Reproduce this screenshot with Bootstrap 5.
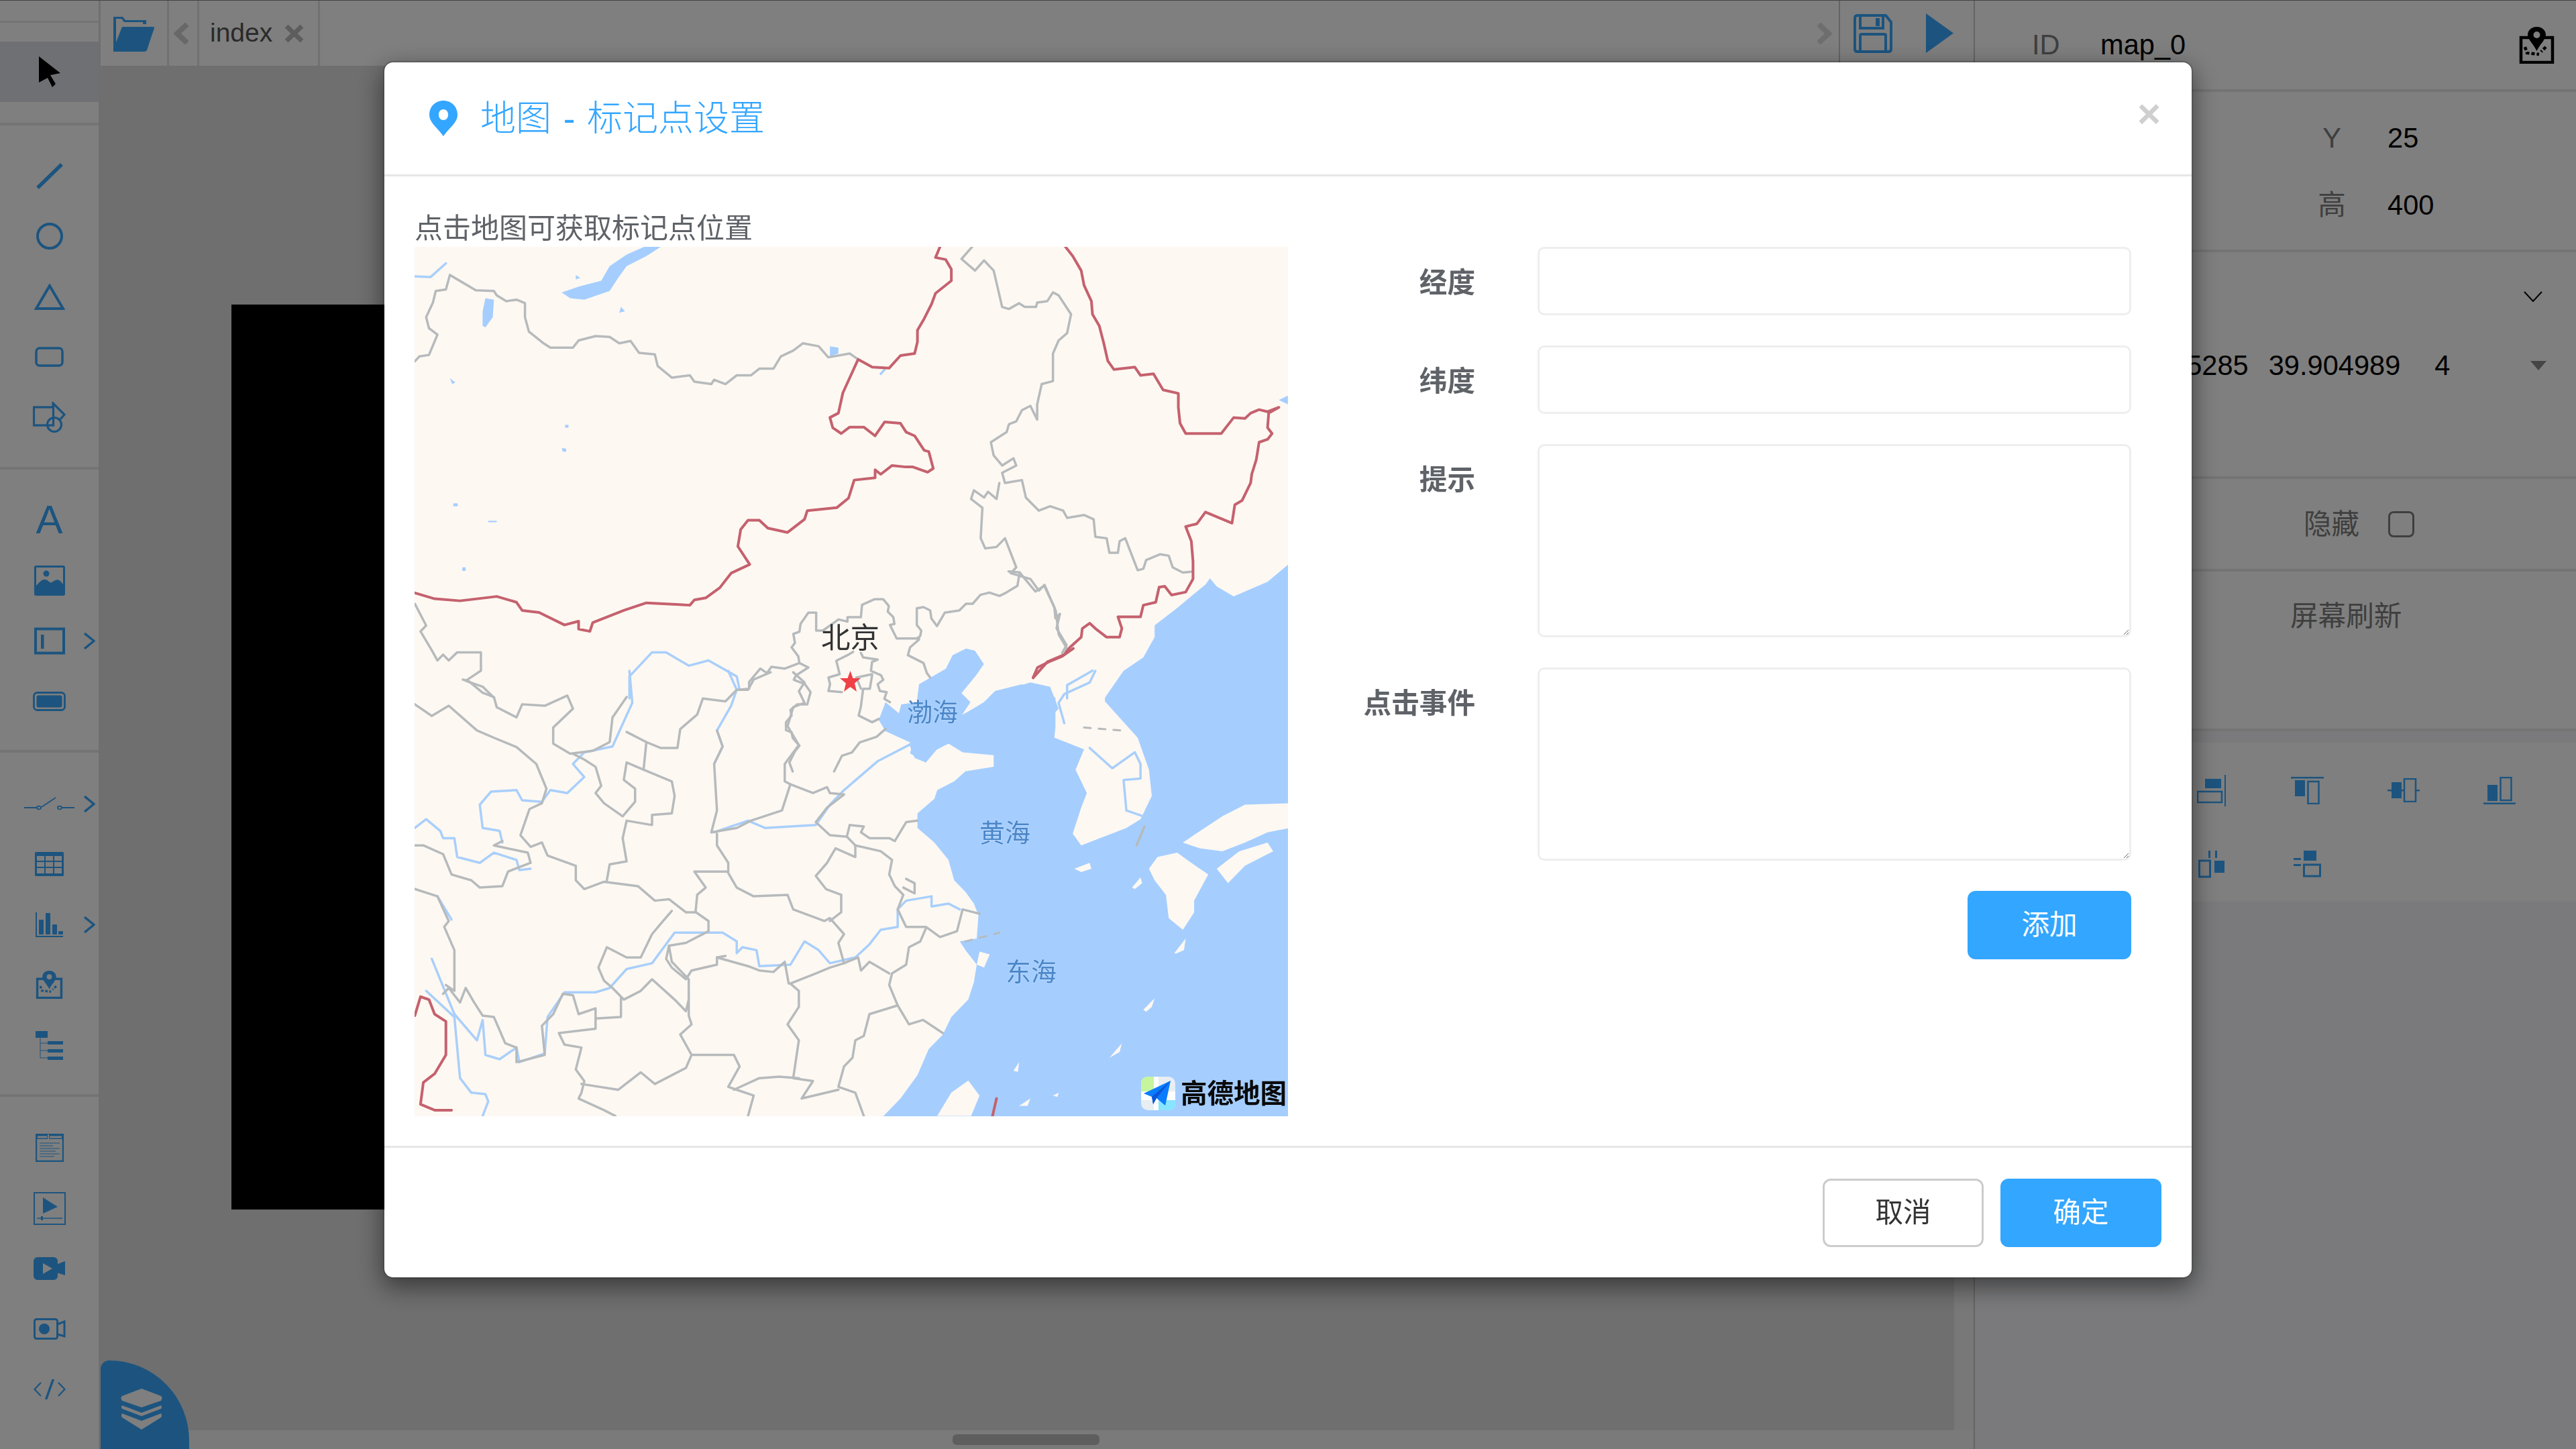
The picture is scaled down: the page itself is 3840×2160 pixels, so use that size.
<!DOCTYPE html>
<html lang="zh-CN">
<head>
<meta charset="utf-8">
<title>地图 - 标记点设置</title>
<link href="https://cdn.jsdelivr.net/npm/bootstrap@5.3.0/dist/css/bootstrap.min.css" rel="stylesheet">
<style>
:root{--ui-blue:#38a8ff;--accent:#33a6ff;--rule:#e8e8e8;--canvas:#dedede;}
html,body{height:100%;margin:0;overflow:hidden;}
body{font-family:"Liberation Sans","Noto Sans CJK SC",sans-serif;font-size:41.6px;background:var(--canvas);color:#7f7f7f;}
.shell{height:2160px;width:3840px;border-top:1px solid #888;}
/* left rail */
.rail{width:147px;background:#fff;margin-right:3px;color:var(--ui-blue);flex:none;}
.rail-sec{border-bottom:4px solid var(--rule);}
.rail-top{height:186px;}
.rail-first{height:513px;padding-top:30px;}
.rail-second{height:422px;padding-top:30px;}
.rail-third{height:513px;padding-top:31px;}
.rail-fourth{padding-top:31px;}
.rail-active{background:#dfe0e8;height:90px;margin-top:28px;color:#000;display:flex;align-items:center;justify-content:center;}
.rail-cut{height:33px;border-bottom:3px solid var(--rule);}
.tool{height:90px;display:grid;place-items:center;}
.tool>svg,.tool>.glyph-a{grid-area:1/1;}
.tool>.more{justify-self:end;margin-right:5px;}
.glyph-a{font-size:60px;line-height:1;}
/* middle */
.mid{flex:1 1 auto;min-width:0;width:2792px;position:relative;}
.topbar{height:97px;background:#fff;flex:none;}
.cell{border-right:3px solid #e2e2e2;height:97px;display:flex;align-items:center;flex:none;}
.cell-folder{width:102px;padding-left:19px;}
.cell-prev{width:45px;padding-left:7px;}
.cell-tab{width:180px;padding-left:16px;color:#555;font-size:39px;gap:18px;}
.tab-x{color:#bbb;}
.bar-fill{flex:1 1 auto;display:flex;align-items:center;justify-content:flex-end;padding-right:10px;}
.bar-actions{width:201px;height:97px;flex:none;display:flex;align-items:center;gap:50px;padding-left:20px;border-left:2px solid #c8c8c8;color:var(--ui-blue);}
.stage{flex:1 1 auto;position:relative;}
.artboard{position:absolute;left:195px;top:356px;width:2400px;height:1349px;background:#000;}
.vtrack{position:absolute;right:0;top:0;bottom:0;width:29px;background:#f0f0f0;}
.layers{position:absolute;left:0;bottom:0;width:132px;height:132px;background:var(--ui-blue);border-radius:14px 100% 0 0;display:flex;align-items:flex-start;justify-content:flex-start;padding:42px 0 0 30px;z-index:2;}
.htrack{height:28px;background:#f5f5f5;flex:none;display:flex;align-items:center;}
.hthumb{margin-left:1270px;width:219px;height:16px;border-radius:6px;background:#bdbdbd;}
/* right */
.side{width:898px;flex:none;background:#fff;border-left:2px solid #c8c8c8;color:#7f7f7f;}
.sec{border-bottom:4px solid var(--rule);}
.sec-id{height:136px;padding:0 32px 0 85px;display:flex;align-items:center;}
.sec-geo{height:239px;padding-top:19px;}
.sec-data{height:338px;}
.sec-hide{height:138px;display:flex;align-items:center;}
.sec-fresh{height:238px;}
.val{color:#000;}
.geo-row{height:100px;display:flex;align-items:center;}
.geo-key{width:80px;margin-left:492px;text-align:center;}
.geo-val{margin-left:43px;}
.id-key{width:102px;}
.id-val{flex:1 1 auto;}
.data-caret{height:132px;display:flex;align-items:center;justify-content:flex-end;padding-right:50px;}
.data-row{display:flex;align-items:center;padding-left:191px;height:72px;margin-top:1px;}
.data-b{margin-left:30px;}
.data-c{margin-left:51px;}
.data-tri{margin-left:auto;margin-right:44px;}
.hide-key{margin-left:490px;width:86px;white-space:nowrap;padding-top:2px;}
.hide-box{margin-left:40px;width:39px;height:39px;border:3px solid #7e7e7e;border-radius:8px;}
.fresh-key{padding:36px 0 0 470px;}
.gap-band{height:17px;background:#f4f5f8;}
.align-box{height:237px;padding:16px 0 0 281px;display:grid;grid-template-columns:repeat(4,143px);grid-auto-rows:110px;place-items:center;color:var(--ui-blue);}
.side-rest{flex:1 1 auto;background:#f4f5f8;}
/* modal */
.dlg-wrap{z-index:1055;}
.dlg{max-width:none;width:2698px;margin:91px 0 0 571px;}
.dlg-card{border:2px solid rgba(0,0,0,.2);border-radius:15px;box-shadow:0 12px 37px rgba(0,0,0,.5);height:1815px;}
.dlg-head{height:170px;padding:0 46px 0 67px;border-bottom:3px solid #e6e6e6;border-radius:0;}
.dlg-title{font-size:53px;font-weight:300;line-height:1;color:var(--accent);margin:0 0 0 34px;word-spacing:3px;}
.dlg-x{background:none;border:0;padding:0;margin-left:auto;font-size:60px;line-height:1;color:#cfcfcf;font-weight:700;margin-top:-14px;}
.dlg-body{padding:0 90px 0 45px;height:1445px;flex:none;}
.map-col{width:1302px;flex:none;}
.map-cap{height:105px;padding-top:50px;line-height:56px;font-size:42px;color:#5f6368;white-space:nowrap;}
.map-svg{display:block;width:1302px;height:1296px;}
.form-col{flex:1 1 auto;padding-top:105px;}
.fld{margin-bottom:45px;display:flex;}
.fld-key{width:279px;flex:none;height:102px;line-height:107px;text-align:right;font-weight:700;color:#5f6368;margin:0;padding:0;}
.fld-in{width:885px;margin-left:93px;height:102px;border:3px solid #eee;border-radius:10px;box-shadow:none;flex:none;}
textarea.fld-in{height:288px;}
.fld-foot{display:flex;justify-content:flex-end;margin-top:2px;}
.act{height:102px;width:244px;border-radius:12px;font-size:41.6px;padding:0;line-height:1;}
.act-main{background:var(--accent);border:0;color:#fff;}
.act-ghost{background:#fff;border:3px solid #ccc;color:#333;width:240px;}
.dlg-foot .act-main{width:240px;}
.dlg-foot{height:196px;padding:46px 45px 0 0;border-top:3px solid #e6e6e6;gap:25px;align-items:flex-start;}
.dlg-foot>*{margin:0;}
.mp *{vector-effect:non-scaling-stroke;}
.ln{fill:none;stroke-linejoin:round;stroke-linecap:round;}
.ln-red{stroke:#c5616e;stroke-width:4;}
.ln-gray{stroke:#b6babc;stroke-width:3.5;}
.ln-blue{stroke:#a9cffb;stroke-width:3.5;}
.ln-dash{stroke:#b6babc;stroke-width:3;stroke-dasharray:10 12;}
.sea{fill:#a5ceff;}
.land{fill:#fdf8f2;}
.city{font-size:43.5px;fill:#333;font-family:"Noto Sans CJK SC",sans-serif;}
.ocean{font-size:38px;fill:#4a86c8;stroke:#c8e0ff;stroke-width:1px;paint-order:stroke;font-family:"Noto Sans CJK SC",sans-serif;}
.brand{font-size:39.5px;font-weight:700;fill:#0a0a0a;font-family:"Noto Sans CJK SC",sans-serif;}
</style>
</head>
<body>
<div class="shell d-flex">
  <!-- left rail -->
  <aside class="rail d-flex flex-column">
    <div class="rail-sec rail-top">
      <div class="rail-cut"></div>
      <div class="rail-active">
        <svg width="32" height="46" viewBox="0 0 32 46"><path d="M0 0 32 25 17 28 25 41 20 46 13 32 0 39Z" fill="currentColor"/></svg>
      </div>
    </div>
    <div class="rail-sec rail-first">
      <div class="tool"><svg width="40" height="39" viewBox="0 0 40 39"><path d="M2 37 38 2" stroke="currentColor" stroke-width="5.5" fill="none"/></svg></div>
      <div class="tool"><svg width="40" height="40" viewBox="0 0 40 40"><circle cx="20" cy="20" r="18" stroke="currentColor" stroke-width="4" fill="none"/></svg></div>
      <div class="tool"><svg width="46" height="39" viewBox="0 0 46 39"><path d="M23 3 43 37H3Z" stroke="currentColor" stroke-width="4" fill="none"/></svg></div>
      <div class="tool"><svg width="43" height="30" viewBox="0 0 43 30"><rect x="2" y="2" width="39" height="26" rx="5" stroke="currentColor" stroke-width="3.5" fill="none"/></svg></div>
      <div class="tool"><svg width="49" height="46" viewBox="0 0 49 46"><g stroke="currentColor" stroke-width="3.2" fill="none"><rect x="1.5" y="8" width="29" height="27"/><path d="M30 8V2L47 19 39 28"/><circle cx="32" cy="34" r="10.5"/></g></svg></div>
    </div>
    <div class="rail-sec rail-second">
      <div class="tool"><span class="glyph-a">A</span></div>
      <div class="tool"><svg width="46" height="45" viewBox="0 0 46 45"><rect width="46" height="45" rx="3" fill="currentColor"/><rect x="3" y="3" width="40" height="34" fill="#fff"/><circle cx="18" cy="12" r="4.5" fill="currentColor"/><path d="M3 30C10 22 15 17 22 24 28 30 32 12 43 28V38H3Z" fill="currentColor"/></svg></div>
      <div class="tool"><svg width="46" height="41" viewBox="0 0 46 41"><rect x="2" y="2.5" width="42" height="36" fill="none" stroke="currentColor" stroke-width="4"/><rect x="10" y="11" width="4.5" height="21" fill="currentColor"/></svg><svg class="more" width="17" height="27" viewBox="0 0 17 27"><path d="M1 2 15 13.500 1 25" fill="none" stroke="currentColor" stroke-width="3.500"/></svg></div>
      <div class="tool"><svg width="49" height="29" viewBox="0 0 49 29"><rect x="1.500" y="1.500" width="46" height="26" rx="5" fill="none" stroke="currentColor" stroke-width="2.800"/><rect x="5.500" y="5.500" width="38" height="18" rx="3" fill="currentColor"/></svg></div>
    </div>
    <div class="rail-sec rail-third">
      <div class="tool"><svg width="75" height="20" viewBox="0 0 75 20"><g fill="none" stroke="currentColor" stroke-width="1.800"><path d="M0 16H20M26 15 47 1M57 16H75"/><ellipse cx="22" cy="16" rx="3" ry="2.400"/><ellipse cx="53" cy="16" rx="3" ry="2.400"/></g></svg><svg class="more" width="17" height="27" viewBox="0 0 17 27"><path d="M1 2 15 13.500 1 25" fill="none" stroke="currentColor" stroke-width="3.500"/></svg></div>
      <div class="tool"><svg width="43" height="36" viewBox="0 0 43 36"><rect width="43" height="36" rx="1.500" fill="currentColor"/><g fill="#fff"><rect x="3" y="6" width="11" height="7"/><rect x="16" y="6" width="11" height="7"/><rect x="29" y="6" width="11" height="7"/><rect x="3" y="15" width="11" height="7"/><rect x="16" y="15" width="11" height="7"/><rect x="29" y="15" width="11" height="7"/><rect x="3" y="24" width="11" height="8"/><rect x="16" y="24" width="11" height="8"/><rect x="29" y="24" width="11" height="8"/></g></svg></div>
      <div class="tool"><svg width="41" height="37" viewBox="0 0 41 37"><path d="M1 0V36H41" fill="none" stroke="currentColor" stroke-width="2"/><g fill="currentColor"><rect x="5" y="11" width="7" height="22"/><rect x="15" y="1" width="7" height="32" rx="1"/><rect x="25" y="18" width="7" height="15" rx="1"/><rect x="34" y="28" width="7" height="5" rx="1"/></g></svg><svg class="more" width="17" height="27" viewBox="0 0 17 27"><path d="M1 2 15 13.500 1 25" fill="none" stroke="currentColor" stroke-width="3.500"/></svg></div>
      <div class="tool"><svg width="41" height="42" viewBox="0 0 53 55"><g fill="none" stroke="currentColor" stroke-width="4.500"><path d="M15 16H3V53H50V16H38"/><path d="M9 30 12 39 30 41M40 30 33 37" stroke-dasharray="5 3"/></g><path fill="currentColor" fill-rule="evenodd" d="M26.500 0C18 0 13 6 13 12 13 19 22 26 26.500 36 31 26 40 19 40 12 40 6 35 0 26.500 0ZM26.500 7A5 5 0 1 1 26.500 17 5 5 0 1 1 26.500 7Z"/></svg></div>
      <div class="tool"><svg width="41" height="43" viewBox="0 0 41 43"><g fill="currentColor"><rect width="18" height="10"/><rect x="18" y="15" width="23" height="5"/><rect x="18" y="27" width="23" height="5"/><rect x="18" y="38" width="23" height="5"/></g><path d="M7 10V40H18M7 18H18M7 29H18" fill="none" stroke="currentColor" stroke-width="1"/></svg></div>
    </div>
    <div class="rail-fourth">
      <div class="tool"><svg width="42" height="42" viewBox="0 0 42 42"><rect x="1" y="1" width="40" height="40" fill="none" stroke="currentColor" stroke-width="2.500"/><rect x="1" y="1" width="40" height="7" fill="currentColor"/><path d="M19 1V8" stroke="#fff" stroke-width="2"/><rect x="3" y="3.500" width="14" height="3" fill="#fff"/><rect x="21" y="3.500" width="18" height="3" fill="#fff"/><path d="M6 14H36M6 18H26M6 22H36M6 26H30M6 30H36M6 34H28" stroke="currentColor" stroke-width="1"/></svg></div>
      <div class="tool"><svg width="48" height="49" viewBox="0 0 48 49"><rect x="1" y="1" width="46" height="47" fill="none" stroke="currentColor" stroke-width="2"/><path d="M14 8 36 22 14 32Z" fill="currentColor"/><path d="M5 39H43" stroke="currentColor" stroke-width="1.500"/><rect x="11" y="36" width="3" height="6" fill="currentColor"/></svg></div>
      <div class="tool"><svg width="47" height="34" viewBox="0 0 47 34"><rect width="36" height="34" rx="6" fill="currentColor"/><path d="M34 11 47 6V27L34 23Z" fill="currentColor"/><path d="M14 9 28 17 14 25Z" fill="#fff"/></svg></div>
      <div class="tool"><svg width="48" height="32" viewBox="0 0 48 32"><rect x="1.500" y="1.500" width="34" height="29" rx="3" fill="none" stroke="currentColor" stroke-width="3"/><ellipse cx="16" cy="16" rx="8" ry="8" fill="currentColor"/><path d="M36 9 46 5V27L36 24" fill="none" stroke="currentColor" stroke-width="3"/></svg></div>
      <div class="tool"><svg width="48" height="30" viewBox="0 0 48 30"><path d="M11 5 1.500 15 11 25M37 5 46.500 15 37 25" fill="none" stroke="currentColor" stroke-width="2.200"/><path d="M19 29 29 1" stroke="currentColor" stroke-width="3.500" stroke-linecap="round"/></svg></div>
    </div>
  </aside>

  <!-- middle -->
  <main class="mid d-flex flex-column">
    <div class="topbar d-flex">
      <div class="cell cell-folder"><svg width="61" height="54" viewBox="0 0 61 54" fill="#38a8ff"><path d="M1 2 H14L18 7H49V13H44V10H16L12 5H4V40L13 17H61L50 52 47 54H0V2Z"/><path d="M14 19H61L49 53H2Z"/></svg></div>
      <div class="cell cell-prev"><svg width="22" height="32" viewBox="0 0 22 32"><path d="M20 2 5 16 20 30" fill="none" stroke="#d0d0d0" stroke-width="8"/></svg></div>
      <div class="cell cell-tab"><span>index</span><svg class="tab-x" width="29" height="28" viewBox="0 0 29 28"><path d="M3 3 26 25M26 3 3 25" stroke="currentColor" stroke-width="7"/></svg></div>
      <div class="bar-fill"><svg width="22" height="32" viewBox="0 0 22 32"><path d="M2 2 17 16 2 30" fill="none" stroke="#dcdcdc" stroke-width="8"/></svg></div>
      <div class="bar-actions">
        <svg width="58" height="58" viewBox="0 0 58 58"><g fill="none" stroke="currentColor" stroke-width="4"><path d="M6 2H48L56 12V52Q56 56 52 56H6Q2 56 2 52V6Q2 2 6 2Z"/><rect x="10" y="2" width="34" height="19"/><rect x="10" y="30" width="38" height="26" rx="2"/></g><rect x="33" y="6" width="6" height="12" fill="currentColor"/></svg>
        <svg width="41" height="59" viewBox="0 0 41 59"><path d="M0 0 41 29.500 0 59Z" fill="currentColor"/></svg>
      </div>
    </div>
    <div class="stage">
      <div class="artboard"></div>
      <div class="vtrack"></div>
    </div>
    <div class="htrack"><div class="hthumb"></div></div>
    <div class="layers"><svg width="62" height="61" viewBox="0 0 62 61"><path d="M31 0 60 11Q63 14 60 18L31 28 2 18Q-1 14 2 11Z" fill="#fff"/><path d="M2 25 31 36 60 25Q62 28 60 30L31 41 2 30Q0 28 2 25ZM2 37 31 48 60 37Q62 40 60 43L31 61 2 43Q0 40 2 37Z" fill="#fff"/></svg></div>
  </main>

  <!-- right panel -->
  <aside class="side d-flex flex-column">
    <div class="sec sec-id">
      <span class="id-key">ID</span><span class="val id-val">map_0</span>
      <svg width="53" height="55" viewBox="0 0 53 55" class="text-black"><g fill="none" stroke="currentColor" stroke-width="4.500"><path d="M15 16H3V53H50V16H38"/><path d="M9 30 12 39 30 41M40 30 33 37" stroke-dasharray="5 3"/></g><path fill="currentColor" fill-rule="evenodd" d="M26.500 0C18 0 13 6 13 12 13 19 22 26 26.500 36 31 26 40 19 40 12 40 6 35 0 26.500 0ZM26.500 7A5 5 0 1 1 26.500 17 5 5 0 1 1 26.500 7Z"/></svg>
    </div>
    <div class="sec sec-geo">
      <div class="geo-row"><span class="geo-key">Y</span><span class="val geo-val">25</span></div>
      <div class="geo-row"><span class="geo-key">高</span><span class="val geo-val">400</span></div>
    </div>
    <div class="sec sec-data">
      <div class="data-caret"><svg width="28" height="16" viewBox="0 0 28 16"><path d="M1 1 14 15 27 1" fill="none" stroke="#000" stroke-width="2"/></svg></div>
      <div class="data-row val"><span>116.405285</span><span class="data-b">39.904989</span><span class="data-c">4</span>
        <svg class="data-tri" width="24" height="14" viewBox="0 0 24 14"><path d="M0 0H24L12 14Z" fill="#8a8a8a"/></svg></div>
    </div>
    <div class="sec sec-hide"><span class="hide-key">隐藏</span><span class="hide-box"></span></div>
    <div class="sec sec-fresh"><div class="fresh-key">屏幕刷新</div></div>
    <div class="gap-band"></div>
    <div class="align-box bg-white">
      <svg width="43" height="47" viewBox="0 0 43 47" fill="currentColor"><rect x="41" width="2" height="47"/><rect x="12" y="6" width="24" height="14"/><rect x="1" y="25" width="36" height="16" fill="none" stroke="currentColor" stroke-width="2.500"/></svg>
      <svg width="49" height="41" viewBox="0 0 49 41" fill="currentColor"><rect width="49" height="2.500"/><rect x="6" y="5" width="15" height="24"/><rect x="25.500" y="7" width="16" height="33" fill="none" stroke="currentColor" stroke-width="2.500"/></svg>
      <svg width="48" height="36" viewBox="0 0 48 36" fill="currentColor"><rect y="17" width="48" height="2.500"/><rect x="6" y="6" width="15" height="24"/><rect x="25" y="1" width="17" height="34" fill="#fff" stroke="currentColor" stroke-width="2.500"/></svg>
      <svg width="48" height="41" viewBox="0 0 48 41" fill="currentColor"><rect y="38.500" width="48" height="2.500"/><rect x="6" y="12" width="15" height="24"/><rect x="25.500" y="1" width="16" height="34" fill="none" stroke="currentColor" stroke-width="2.500"/></svg>
      <svg width="39" height="41" viewBox="0 0 39 41" fill="currentColor"><rect x="15" width="3" height="11"/><rect x="25" width="3" height="11"/><rect x="1.500" y="15" width="16" height="24" fill="none" stroke="currentColor" stroke-width="3"/><rect x="24" y="15" width="15" height="18"/></svg>
      <svg width="41" height="40" viewBox="0 0 41 40" fill="currentColor"><rect y="11" width="11" height="3"/><rect y="20" width="11" height="3"/><rect x="15" width="19" height="15"/><rect x="15.500" y="21" width="24" height="17" fill="none" stroke="currentColor" stroke-width="3"/></svg>
    </div>
    <div class="side-rest"></div>
  </aside>
</div>

<div class="modal-backdrop fade show"></div>

<div class="modal d-block dlg-wrap" tabindex="-1">
  <div class="modal-dialog dlg">
    <div class="modal-content dlg-card">
      <div class="modal-header dlg-head">
        <svg width="42" height="53" viewBox="0 0 42 53"><path fill="#33a6ff" fill-rule="evenodd" d="M21 0C9 0 0 9 0 21 0 33 12 40 21 53 30 40 42 33 42 21 42 9 33 0 21 0ZM21 13C26 13 28 17 28 21 28 25 26 29 21 29 16 29 14 25 14 21 14 17 16 13 21 13Z"/></svg>
        <h5 class="modal-title dlg-title">地图 - 标记点设置</h5>
        <button type="button" class="dlg-x" aria-label="Close">×</button>
      </div>
      <div class="modal-body dlg-body d-flex">
        <div class="map-col">
          <div class="map-cap">点击地图可获取标记点位置</div>
          <svg class="map-svg" viewBox="618 368 1302 1296" xmlns="http://www.w3.org/2000/svg">
            <rect x="618" y="368" width="1302" height="1296" class="land"/>
            <g class="mp" transform="translate(610,1000) scale(.8418,.4337)">
              <polygon class="sea" points="840,1530 870,1470 900,1390 920,1300 945,1250 960,1190 990,1130 1000,1070 1005,1010 985,960 975,930 1005,920 1008,840 1000,800 985,760 965,720 955,650 930,590 900,540 900,490 930,440 935,410 965,380 985,345 1035,330 1035,290 980,280 955,250 925,280 915,315 895,300 885,250 930,200 1000,130 1050,70 1100,40 1135,55 1150,130 1130,170 1130,220 1195,270 1180,340 1200,420 1190,470 1175,560 1190,600 1270,540 1295,510 1315,430 1310,340 1290,230 1232,105 1232,92 1265,0 1300,-46 1320,-116 1320,-156 1360,-216 1400,-281 1410,-296 1418,-318 1430,-290 1460,-256 1520,-306 1560,-371 1560,1535 840,1535"/>
              <g class="land">
                <polygon points="1310,680 1325,640 1360,625 1385,660 1415,700 1390,790 1390,830 1370,890 1345,850 1340,770 1320,720"/>
                <polygon points="1370,590 1440,500 1480,460 1560,455 1560,540 1520,555 1480,590 1440,620 1400,610"/>
                <polygon points="1430,680 1470,620 1520,590 1530,620 1480,670 1450,730"/>
                <polygon points="1178,680 1205,660 1208,680 1190,692"/>
                <polygon points="935,1530 960,1450 990,1408 1010,1460 995,1530"/>
                <polygon points="1280,745 1295,710 1298,730 1285,750"/>
                <polygon points="1355,970 1375,920 1372,960 1358,972"/>
                <polygon points="1300,1165 1320,1125 1315,1155 1305,1172"/>
                <polygon points="1240,1330 1262,1280 1258,1310"/>
                <polygon points="1070,1375 1080,1345 1078,1378"/>
                <polygon points="1080,1495 1100,1470 1095,1495"/>
                <polygon points="1140,1460 1150,1450 1148,1465"/>
                <polygon points="1010,965 1028,975 1018,1020 1005,1010"/>
              </g>
            </g>
            <g class="mp" transform="translate(1100,850) scale(.33333)">
              <polygon class="sea" points="630,670 660,590 720,640 730,600 800,590 810,510 930,440 960,380 1020,350 1060,360 1100,420 1065,470 1000,550 1040,590 1000,650 1100,590 1150,540 1270,510 1420,570 1420,700 1400,900 1140,820 1000,800 960,770 900,790 840,860 770,820 780,775 660,720"/>
              <polyline class="ln ln-gray" points="0,535 50,530 50,500 100,440 130,460 150,432 210,440 275,415 270,385 240,345 255,325 248,285 275,275 280,240 315,190 350,190 350,270 380,270 450,220 490,230 490,210 550,210 555,155 610,130 650,130 675,160 670,185 695,210 700,240 680,245 710,305 810,305"/>
              <polyline class="ln ln-gray" points="800,305 815,295 820,270 800,245 800,170 830,165 860,180 865,215 890,250 925,190 990,180 1020,150 1050,150 1085,110 1125,100 1170,115 1200,100 1250,70 1260,10 1210,5"/>
              <polyline class="ln ln-gray" points="1260,10 1330,95 1370,70 1415,165 1420,215 1440,195 1425,260 1470,335 1450,370"/>
              <polyline class="ln ln-gray" points="810,310 770,345 760,380 790,395 830,415 845,460 860,480"/>
              <polyline class="ln ln-gray" points="515,365 490,380 440,405 455,465 405,480 412,510 405,540 465,545"/>
              <polyline class="ln ln-gray" points="600,470 590,530 560,530 550,610 540,650 600,680 630,665"/>
              <polyline class="ln ln-gray" points="550,370 560,390 625,400 600,410 595,450 640,470 650,490 625,510 635,540 665,545 655,575 680,590"/>
              <polyline class="ln ln-gray" points="550,530 530,480 600,465"/>
              <polyline class="ln ln-gray" points="275,415 315,435 260,470 250,490 300,510 325,545 310,600 265,600 235,625 240,650 215,680 215,715 240,725 245,750 275,785 255,810 230,860 245,900"/>
              <polyline class="ln ln-gray" points="660,710 620,745 545,770 510,815 465,830 430,900"/>
              <polyline class="ln ln-red" points="1320,480 1340,435 1390,410 1450,385 1500,350"/>
            </g>
            <g class="mp" transform="translate(610,360) scale(.8418,.4337)">
              <polygon class="sea" points="270,175 300,155 340,135 355,85 385,45 420,15 448,15 420,50 385,85 370,125 355,170 310,200 285,195"/>
              <polygon class="sea" points="130,290 130,240 135,195 150,200 148,260 135,295"/>
              <polygon class="sea" points="745,360 760,365 760,385 745,395"/>
              <polygon class="sea" points="1540,545 1556,530 1556,560"/>
              <polygon class="sea" points="295,115 303,125 295,130"/>
              <polygon class="sea" points="375,225 382,240 372,245"/>
              <polygon class="sea" points="72,470 82,485 76,490"/>
              <polygon class="sea" points="78,900 86,900 86,910 78,910"/>
              <polygon class="sea" points="140,960 155,960 155,965 140,965"/>
              <polygon class="sea" points="270,710 278,712 278,722 272,722"/>
              <polygon class="sea" points="94,1120 100,1120 100,1132 94,1132"/>
              <polygon class="sea" points="276,630 282,630 282,640 276,640"/>
              <polyline class="ln ln-blue" points="10,120 38,122 65,75"/>
              <polyline class="ln ln-blue" points="835,455 842,440"/>
              <polyline class="ln ln-blue" points="390,1570 390,1495 430,1412 455,1412 495,1458 530,1440 580,1495 585,1540"/>
              <polyline class="ln ln-blue" points="1210,1475 1165,1525 1165,1570"/>
              <polyline class="ln ln-gray" points="10,412 18,395 35,390 50,320 35,298 30,260 42,210 47,170 65,165 72,115 118,168 150,170 155,185 172,205 190,200 205,212 205,260 212,310 238,350 250,365 290,365 300,340 330,325 355,328 372,350 392,342 407,383 435,388 440,428 465,468 497,460 505,482 535,490 540,475 560,490 580,460 605,460 620,437 645,437 658,395 680,375 697,350 725,360 742,398 780,385 795,405"/>
              <polyline class="ln ln-gray" points="997,18 978,60 1002,100 1018,65 1035,100 1050,225 1062,232 1080,212 1090,225 1110,225 1112,210 1130,205 1140,175 1150,185 1172,250 1165,315 1150,340 1140,385 1140,480 1120,490 1112,560 1112,612 1100,565 1085,580 1075,618 1062,628 1058,655 1030,690 1035,735 1050,770 1070,745 1075,770 1050,795 1055,830 1085,820 1092,880 1115,925 1135,910 1158,925 1165,950 1195,940 1212,955 1215,1015 1235,1020 1240,1070 1255,1070 1258,1030 1268,1020 1290,1130 1300,1125 1305,1095 1330,1075 1345,1080 1352,1120 1370,1138 1385,1135"/>
              <polyline class="ln ln-gray" points="1045,830 1040,885 1025,860 1018,880 1000,855 995,885 1015,915 1012,1020 1020,1055 1040,1050 1055,1020 1075,1120 1065,1140 1100,1160 1115,1200 1125,1180 1145,1270 1150,1350 1165,1400 1160,1420"/>
              <polyline class="ln ln-gray" points="10,1245 30,1320 20,1340 40,1405 50,1440 60,1420 70,1440 85,1412 127,1412 127,1475 100,1510 130,1530 150,1568"/>
              <polyline class="ln ln-red" points="940,18 932,55 950,62 960,95 960,135 932,178 925,215 912,265 900,305 900,345 895,385 870,392 850,435 820,432 795,405 768,520 760,590 745,605 750,640 765,660 780,638 805,638 825,668 842,620 870,625 880,655 895,668 912,718 920,722 928,780 918,793 892,775 880,775 855,770 835,800 825,785 825,812 788,820 778,882 757,915 705,925 700,955 670,1000 635,985 620,958 600,958 587,990 582,1048 603,1110 570,1140 550,1190 525,1225 505,1232 497,1250 420,1242 380,1268 325,1310 320,1340 300,1332 300,1305 275,1318 230,1275 200,1268 190,1240 155,1220 90,1235 45,1228 10,1208"/>
              <polyline class="ln ln-red" points="1162,18 1175,50 1190,100 1195,150 1208,205 1210,250 1222,290 1230,350 1237,410 1248,440 1285,432 1295,460 1318,455 1335,510 1362,522 1362,570 1365,625 1375,660 1438,660 1460,605 1480,608 1490,590 1505,578 1520,585 1540,570 1522,590 1520,640 1528,660 1520,680 1505,690 1500,750 1492,800 1490,830 1475,890 1462,905 1457,968 1410,930 1395,970 1375,980 1385,1030 1388,1100 1388,1160 1375,1205 1350,1215 1338,1185 1328,1188 1322,1240 1300,1250 1295,1290 1255,1290 1262,1330 1258,1360 1235,1360 1215,1330 1205,1312 1192,1330 1190,1360 1170,1395 1160,1420 1130,1445 1105,1500"/>
            </g>
            <g class="mp" transform="translate(610,1000) scale(.8418,.4337)">
              <polyline class="ln ln-blue" points="390,0 395,110 360,260 310,280 290,320 310,365 280,420 250,410 235,450 200,445 190,410 145,415 125,460 130,540 160,550 165,590"/>
              <polyline class="ln ln-blue" points="890,250 830,310 770,410 745,460 720,530 630,540 600,515 540,555"/>
              <polyline class="ln ln-blue" points="540,320 555,260 545,205 570,120 580,65 565,0"/>
              <polyline class="ln ln-blue" points="10,540 30,510 55,550 60,575 80,575 85,640 125,660 150,625 190,650 195,685 215,680"/>
              <polyline class="ln ln-blue" points="975,820 955,800 925,810 925,775 880,790 865,820 865,880 835,890 815,940 790,985 745,1005 725,960 700,930 675,1010 620,1015 615,960 590,950 580,970 580,930 555,900 470,900 430,1005 385,1025 355,1090 330,1105 275,1105 245,1190 240,1315 195,1345 190,1295 160,1335 135,1320 130,1200 120,1270 80,1180 40,990"/>
              <polyline class="ln ln-blue" points="30,1100 80,1190 90,1400 110,1450 135,1455 140,1480 130,1530"/>
              <polyline class="ln ln-blue" points="50,775 75,855"/>
              <polyline class="ln ln-blue" points="1215,0 1205,40 1160,80 1150,110 1160,180"/>
              <polyline class="ln ln-blue" points="1205,265 1245,335 1285,280 1295,320 1295,370 1265,375 1270,480 1300,500"/>
              <polyline class="ln ln-gray" points="10,115 40,155 70,120 120,205 150,230 190,262 225,320 243,405 235,455 213,475 197,565 215,605 235,590 245,635 295,670 295,720 310,750 345,725 405,740 435,790 460,785 490,830 508,830 530,860 530,895 490,935 460,945 465,1000 495,1060 495,1185"/>
              <polyline class="ln ln-gray" points="95,30 105,35 130,75 150,90 155,125 190,160 200,115 240,120 280,85 290,130 255,195 255,250 285,285 325,275 355,245 360,160 385,90"/>
              <polyline class="ln ln-gray" points="385,210 420,245 415,340 385,315 380,375 400,405 400,450 378,500 345,455 330,420 340,395 330,330 310,305 290,285"/>
              <polyline class="ln ln-gray" points="415,340 465,380 470,430 465,490 430,495 430,530 385,515 378,575 385,655 355,665 350,720"/>
              <polyline class="ln ln-gray" points="420,245 445,265 475,265 480,200 510,150 520,95 560,105 580,65 600,65 610,30 640,5"/>
              <polyline class="ln ln-gray" points="545,205 555,260 540,320 545,480 535,555 580,540 605,515 660,480 675,390 665,380 665,320 690,255 670,190 680,125 700,110 690,70 700,40 680,5"/>
              <polyline class="ln ln-gray" points="545,560 545,600 565,660 565,690 505,690 525,745 510,770 507,830"/>
              <polyline class="ln ln-gray" points="565,695 580,745 610,775 670,770 680,820 735,860 745,850 770,905 760,935 770,1005 745,1020 720,1040 675,1075 690,1100 690,1155 670,1215 690,1270 680,1400 715,1410 695,1470 760,1440"/>
              <polyline class="ln ln-gray" points="675,390 715,420 740,400 745,420 770,425 740,470 720,520 745,565 775,570 780,530 805,535 800,555 815,575 850,575 860,585 880,520 900,515"/>
              <polyline class="ln ln-gray" points="775,570 790,600 835,620 855,650 850,700 860,740 875,770 865,820 880,880 915,880 940,915 970,895 980,820 1010,835"/>
              <polyline class="ln ln-gray" points="790,600 790,640 755,610 740,660 720,705 738,750 765,770 765,830 745,860"/>
              <polyline class="ln ln-gray" points="880,715 895,730 895,765 875,745"/>
              <polyline class="ln ln-gray" points="915,885 905,930 885,950 880,1010 855,1040 850,1080 865,1150 815,1180 805,1255 790,1270 785,1330 770,1360 760,1430 790,1450 805,1530"/>
              <polyline class="ln ln-gray" points="865,1150 885,1215 910,1200 945,1245"/>
              <polyline class="ln ln-gray" points="770,1005 795,985 800,1030 815,1000 850,1040"/>
              <polyline class="ln ln-gray" points="560,980 545,985 545,1010 500,1030 490,1060 465,1020 455,990 460,945"/>
              <polyline class="ln ln-gray" points="545,985 600,1015 620,1030 645,1035 665,1000 672,1075"/>
              <polyline class="ln ln-gray" points="495,1130 490,1170 470,1130 430,1060 410,1100 380,1130 360,1090 345,1065 335,1020 350,950 385,985 410,985 430,905 445,870 465,825"/>
              <polyline class="ln ln-gray" points="375,1125 375,1190 330,1195 330,1160 300,1180 290,1115 272,1110 255,1180 235,1220 240,1320 190,1345 190,1295 170,1280 150,1190 130,1185 115,1140 100,1090 90,1140 70,1090 60,1110"/>
              <polyline class="ln ln-gray" points="330,1195 330,1230 265,1245 275,1285 305,1295 295,1370 310,1410 305,1450 300,1470 345,1510 365,1530"/>
              <polyline class="ln ln-gray" points="305,1420 370,1440 410,1380 435,1420 490,1365 500,1320 480,1250 500,1215 495,1185"/>
              <polyline class="ln ln-gray" points="500,1320 545,1320 575,1320 585,1360 565,1430 580,1440 610,1460 600,1530"/>
              <polyline class="ln ln-gray" points="575,1440 620,1400 655,1395 690,1400"/>
              <polyline class="ln ln-gray" points="10,600 25,600 60,630 75,700 110,720 125,745 165,740 175,690 215,660 210,625 150,600 165,585"/>
              <polyline class="ln ln-gray" points="10,750 50,775 70,860 62,880 80,960 80,1100 65,1080"/>
              <polyline class="ln ln-red" points="10,1185 20,1120 35,1130 45,1180 65,1205 65,1320 45,1385 25,1415 20,1490 45,1510 75,1510"/>
              <polyline class="ln ln-red" points="1040,1470 1033,1530"/>
              <polyline class="ln ln-dash" points="1195,195 1260,205"/>
              <polyline class="ln ln-dash" points="985,930 1045,900"/>
              <polyline class="ln ln-gray" points="1302,535 1288,600"/>
            </g>
            <path d="M1267.500 1000 1271.500 1011 1283 1011 1274 1018.500 1277 1031 1267.500 1024 1258 1031 1261 1018.500 1252 1011 1263.500 1011Z" fill="#ef4146"/>
            <text class="city" x="1224" y="966">北京</text>
            <text class="ocean" x="1352" y="1075">渤海</text>
            <text class="ocean" x="1460" y="1255">黄海</text>
            <text class="ocean" x="1499" y="1462">东海</text>
            <rect x="1701" y="1605" width="51" height="50" rx="10" fill="#e9eef2"/>
            <path d="M1711 1605H1720V1627H1701V1615Q1701 1605 1711 1605Z" fill="#c5f59d"/>
            <path d="M1727 1640H1752V1645Q1752 1655 1742 1655H1727Z" fill="#87e5ff"/>
            <path d="M1720 1605H1727V1655H1720ZM1701 1627H1752V1640H1701Z" fill="#fdfeff"/>
            <path d="M1705 1630 1745 1611 1737 1648 1724 1637 1719 1646 1717 1635Z" fill="#0a7cff"/>
            <path d="M1717 1635 1745 1611 1724 1637 1719 1646Z" fill="#0b55d6"/>
            <text class="brand" x="1760" y="1644">高德地图</text>
          </svg>
        </div>
        <form class="form-col">
          <div class="fld"><label class="fld-key">经度</label><input class="form-control fld-in" type="text"></div>
          <div class="fld"><label class="fld-key">纬度</label><input class="form-control fld-in" type="text"></div>
          <div class="fld"><label class="fld-key">提示</label><textarea class="form-control fld-in"></textarea></div>
          <div class="fld"><label class="fld-key">点击事件</label><textarea class="form-control fld-in"></textarea></div>
          <div class="fld-foot"><button type="button" class="btn act act-main">添加</button></div>
        </form>
      </div>
      <div class="modal-footer dlg-foot">
        <button type="button" class="btn act act-ghost">取消</button>
        <button type="button" class="btn act act-main">确定</button>
      </div>
    </div>
  </div>
</div>
<script src="https://cdn.jsdelivr.net/npm/bootstrap@5.3.0/dist/js/bootstrap.bundle.min.js"></script>
</body>
</html>
